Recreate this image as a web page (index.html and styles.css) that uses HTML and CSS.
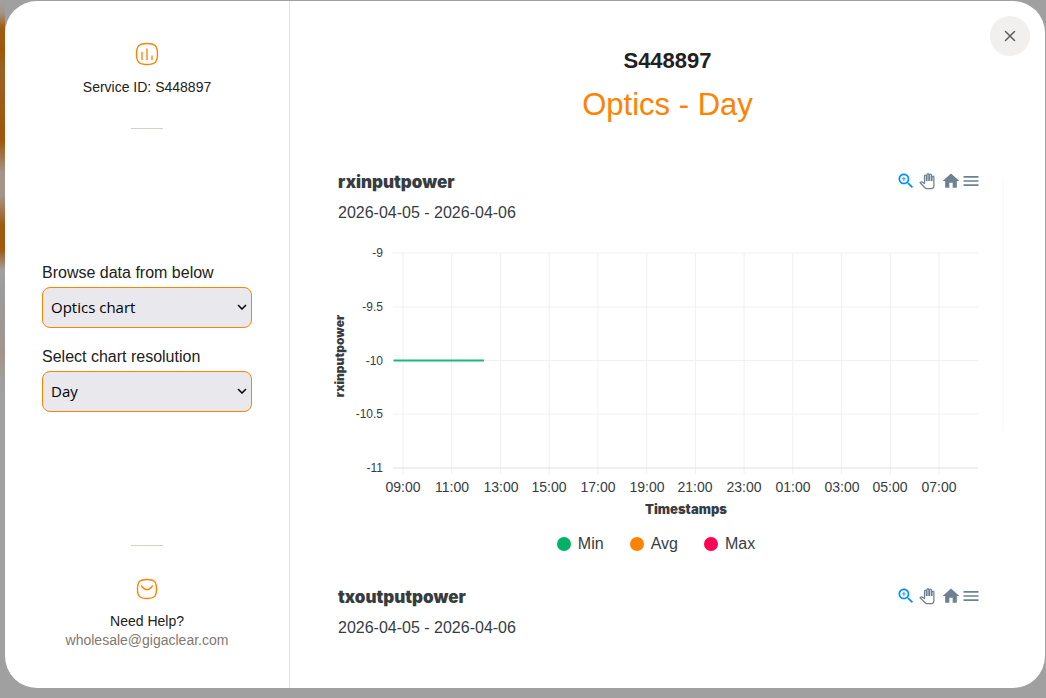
FILE: index.html
```
<!DOCTYPE html>
<html lang="en">
<head>
<meta charset="utf-8">
<meta name="viewport" content="width=device-width, initial-scale=1">
<title>S448897 Optics - Day</title>
<link rel="stylesheet" href="styles.css">
</head>
<body>
<svg class="sprite" aria-hidden="true">
  <symbol id="zoom" viewBox="0 0 24 24"><path d="M15.5 14h-.79l-.28-.27C15.41 12.59 16 11.11 16 9.5 16 5.91 13.09 3 9.5 3S3 5.91 3 9.5 5.91 16 9.5 16c1.61 0 3.09-.59 4.23-1.57l.27.28v.79l5 4.99L20.49 19l-4.99-5zm-6 0C7.01 14 5 11.99 5 9.5S7.01 5 9.5 5 14 7.01 14 9.5 11.99 14 9.5 14z"/><path d="M12 10h-2v2H9v-2H7V9h2V7h1v2h2v1z"/></symbol>
  <symbol id="pan" viewBox="-4 -4 32 32"><path fill="#fff" stroke="#6e8192" stroke-width="2" d="M23 5.5V20c0 2.2-1.8 4-4 4h-7.3c-1.08 0-2.1-.43-2.85-1.19L1 14.83s1.26-1.23 1.3-1.25c.22-.19.49-.29.79-.29.22 0 .42.06.6.16.04.01 4.31 2.46 4.31 2.46V4c0-.83.67-1.5 1.5-1.5S11 3.17 11 4v7h1V1.5c0-.83.67-1.5 1.5-1.5S15 .67 15 1.5V11h1V2.5c0-.83.67-1.5 1.5-1.5s1.5.67 1.5 1.5V11h1V5.5c0-.83.67-1.5 1.5-1.5s1.5.67 1.5 1.5z"/></symbol>
  <symbol id="home" viewBox="0 0 24 24"><path d="M10 20v-6h4v6h5v-8h3L12 3 2 12h3v8z"/></symbol>
  <symbol id="menu" viewBox="0 0 24 24"><path d="M3 18h18v-2H3v2zm0-5h18v-2H3v2zm0-7v2h18V6H3z"/></symbol>
</svg>
<div class="dialog" role="dialog" aria-labelledby="service">
  <button class="close" type="button" aria-label="Close"><svg width="12" height="12" viewBox="0 0 12 12"><path d="M1.500 1.500l9 9M10.500 1.500l-9 9" fill="none" stroke="#5c5c5c" stroke-width="1.500" stroke-linecap="round"/></svg></button>
  <aside class="sidebar">
    <div class="block">
      <svg width="24" height="24" viewBox="0 0 24 24" fill="none" stroke="#ff8200"><path stroke-width="1.400" d="M12 1.500c8 0 10.500 2.500 10.500 10.500S20 22.500 12 22.500 1.500 20 1.500 12 4 1.500 12 1.500z"/><path stroke-width="1.700" stroke-opacity=".8" d="M7 10v8M12 6.500V18M17 13.500V18"/></svg>
      <p class="service">Service ID: S448897</p>
      <hr class="rule">
    </div>
    <form class="filters">
      <label for="chart">Browse data from below</label>
      <select id="chart"><option>Optics chart</option></select>
      <label for="resolution">Select chart resolution</label>
      <select id="resolution"><option>Day</option></select>
    </form>
    <div class="block help">
      <hr class="rule">
      <svg width="22" height="22" viewBox="0 0 22 22" fill="none" stroke="#ff8200" stroke-width="1.400"><path d="M11 1.500c7.500 0 9.500 2.500 9.500 9.500s-2 9.500-9.500 9.500S1.500 18 1.500 11 3.500 1.500 11 1.500z"/><path stroke-linecap="round" d="M5.500 8c4 5 7 5 11 0"/></svg>
      <p>Need Help?</p>
      <a href="mailto:wholesale@gigaclear.com">wholesale@gigaclear.com</a>
    </div>
  </aside>
  <main class="main">
    <h1 id="service">S448897</h1>
    <h2>Optics - Day</h2>
    <div class="scroller">
      <div class="charts">
        <section class="chart">
          <header class="chart-head">
            <h3>rxinputpower</h3>
            <div class="tools">
              <button class="active" type="button" aria-label="Selection zoom"><svg><use href="#zoom"/></svg></button>
              <button type="button" aria-label="Panning"><svg><use href="#pan"/></svg></button>
              <button type="button" aria-label="Reset zoom"><svg><use href="#home"/></svg></button>
              <button type="button" aria-label="Menu"><svg><use href="#menu"/></svg></button>
            </div>
          </header>
          <p class="range">2026-04-05 - 2026-04-06</p>
          <svg class="plot" viewBox="0 0 641 280" role="img" aria-label="rxinputpower by time">
            <path class="grid" d="M55 13H640M55 67H640M55 120.500H640M55 174H640"/>
            <path class="grid" d="M65 13V234M113.700 13V234M162.500 13V234M211.200 13V234M259.900 13V234M308.700 13V234M357.400 13V234M406.100 13V234M454.800 13V234M503.600 13V234M552.300 13V234M601 13V234"/>
            <path class="axis" d="M55 228H640"/>
            <path class="series" d="M55.500 120.500H146"/>
            <g class="y-labels">
              <text x="45" y="17">-9</text><text x="45" y="71">-9.5</text><text x="45" y="125">-10</text><text x="45" y="178">-10.5</text><text x="45" y="232">-11</text>
            </g>
            <g class="x-labels">
              <text x="65" y="252">09:00</text><text x="114" y="252">11:00</text><text x="163" y="252">13:00</text><text x="211" y="252">15:00</text><text x="260" y="252">17:00</text><text x="309" y="252">19:00</text><text x="357" y="252">21:00</text><text x="406" y="252">23:00</text><text x="455" y="252">01:00</text><text x="504" y="252">03:00</text><text x="552" y="252">05:00</text><text x="601" y="252">07:00</text>
            </g>
            <text class="axis-title y-title" transform="translate(6 116) rotate(-90)">rxinputpower</text>
            <text class="axis-title" x="348" y="274">Timestamps</text>
          </svg>
          <ul class="legend">
            <li><span class="dot min"></span>Min</li>
            <li><span class="dot avg"></span>Avg</li>
            <li><span class="dot max"></span>Max</li>
          </ul>
        </section>
        <section class="chart">
          <header class="chart-head">
            <h3>txoutputpower</h3>
            <div class="tools">
              <button class="active" type="button" aria-label="Selection zoom"><svg><use href="#zoom"/></svg></button>
              <button type="button" aria-label="Panning"><svg><use href="#pan"/></svg></button>
              <button type="button" aria-label="Reset zoom"><svg><use href="#home"/></svg></button>
              <button type="button" aria-label="Menu"><svg><use href="#menu"/></svg></button>
            </div>
          </header>
          <p class="range">2026-04-05 - 2026-04-06</p>
        </section>
      </div>
      <div class="track"></div>
    </div>
  </main>
</div>
</body>
</html>
```
FILE: styles.css
```
* { box-sizing: border-box; margin: 0; padding: 0; }
body {
  display: flex;
  min-height: 100vh;
  padding: 1px 1px 10px 5px;
  font: 14px/20px "Liberation Sans", Arial, sans-serif;
  color: #212121;
  background:
    linear-gradient(#a3a09f 0, #a3978e 12px, #a05c14 28px, #a05608 50px, #9c6026 70px, #a05608 140px, #a3958a 172px, #a3958a 196px, #a05a10 225px, #a05a10 250px, #a0a0a0 270px, #9b9b9b 300px, #a3948a 355px, #a0a0a0 385px, #a0a0a0 100%) left / 5px 100% no-repeat,
    #a0a0a0;
}
.sprite { position: absolute; width: 0; height: 0; }
.dialog {
  position: relative;
  display: flex;
  flex: 1;
  background: #fff;
  border-radius: 32px;
  overflow: hidden;
}
.close {
  position: absolute;
  top: 15px;
  right: 15px;
  display: grid;
  place-items: center;
  width: 40px;
  height: 40px;
  border: 0;
  border-radius: 50%;
  background: #f1f0ef;
}
.sidebar {
  display: flex;
  flex-direction: column;
  justify-content: space-between;
  flex: 0 0 285px;
  padding: 41px 37px 38px;
  border-right: 1px solid #e2e2e2;
}
.block { display: flex; flex-direction: column; align-items: center; }
.service { margin: 11px 0 31px; }
.rule { width: 32px; border: 0; border-top: 1px solid #d3d0c8; }
.help svg { margin: 32px 0 12px; }
.help p, .help a { line-height: 19px; }
.help a { color: #83786f; text-decoration: none; }
.filters { display: flex; flex-direction: column; font-size: 16px; }
.filters label { margin-bottom: 4px; }
.filters select {
  appearance: none;
  height: 41px;
  padding: 0 8px;
  border: 1px solid #ff8200;
  border-radius: 8px;
  font: 15px "Open Sans", "Noto Sans", sans-serif;
  color: #000;
  background: #e9e8ed url("data:image/svg+xml,%3Csvg xmlns='http://www.w3.org/2000/svg' width='10' height='6'%3E%3Cpath d='M1 1l4 4 4-4' fill='none' stroke='%23000' stroke-width='1.500'/%3E%3C/svg%3E") right 4px center no-repeat;
}
.filters select + label { margin-top: 19px; }
.main { flex: 1; min-width: 0; padding: 46px 41px 0 48px; }
h1, h2 { margin-right: 7px; margin-left: 0; text-align: center; }
.main h1 { font-size: 22px; line-height: 28px; }
.main h2 { margin-top: 10px; font-size: 31px; line-height: 40px; font-weight: 400; color: #ff8200; }
.scroller { display: flex; gap: 23px; margin-top: 45px; }
.charts { flex: 1; min-width: 0; }
.track { width: 2px; height: 250px; margin-top: 11px; background: #fafafa; }
.chart { color: #373d3f; }
.chart-head { display: flex; justify-content: space-between; height: 24px; }
.chart-head h3 { font: 900 17px/24px Inter, sans-serif; }
.tools { display: flex; margin: 1px -2px 0 0; }
.tools button { width: 20px; height: 20px; border: 0; background: none; fill: #6e8192; }
.tools button:nth-child(2) { margin: 0 4px 0 1px; }
.tools .active { fill: #008ffb; }
.tools svg { display: block; width: 20px; height: 20px; }
.range { margin-top: 9px; font-size: 16px; line-height: 20px; }
.plot { display: block; width: 100%; margin-top: 17px; overflow: visible; fill: #373d3f; }
.grid { fill: none; stroke: #f0f0f0; }
.axis { stroke: #e0e0e0; stroke-width: 1; }
.series { stroke: #1cb877; stroke-width: 2; }
.y-labels { font-size: 12px; text-anchor: end; }
.x-labels { font-size: 14px; text-anchor: middle; }
.axis-title { font: 900 13px Inter, sans-serif; text-anchor: middle; }
.y-title { font-size: 12px; }
.legend { display: flex; justify-content: center; gap: 26px; margin: 14px 0 31px; padding-right: 5px; font-size: 16px; list-style: none; }
.legend li { display: flex; align-items: center; gap: 7px; }
.dot { width: 14px; height: 14px; border-radius: 50%; }
.min { background: #00b166; }
.avg { background: #ff8200; }
.max { background: #ff0052; }
```
